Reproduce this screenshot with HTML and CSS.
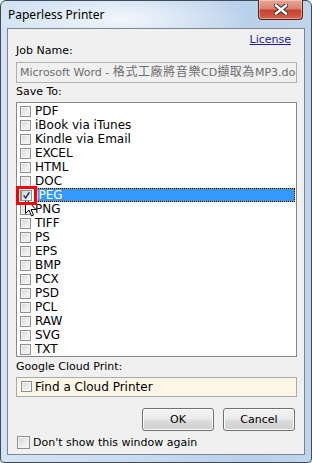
FILE: index.html
```html
<!DOCTYPE html>
<html lang="zh-TW">
<head>
  <meta charset="UTF-8">
  <meta name="viewport" content="width=device-width, initial-scale=1.0">
  <title>Paperless Printer</title>
  <link rel="stylesheet" href="styles.css">
</head>
<body>
  <div class="window">
    <div class="titlebar">
      <span class="title">Paperless Printer</span>
      <button class="close" type="button">
        <svg width="14" height="11" viewBox="0 0 14 11">
          <path d="M2 1.5 L12 9.5 M12 1.5 L2 9.5" stroke="#3a2a28" stroke-width="4.4" stroke-linecap="square"/>
          <path d="M2 1.5 L12 9.5 M12 1.5 L2 9.5" stroke="#fff" stroke-width="2.4" stroke-linecap="square"/>
        </svg>
      </button>
    </div>

    <div class="client">
      <div class="top-row">
        <span class="label job">Job Name:</span>
        <a class="license" href="#">License</a>
      </div>
      <div class="textbox">Microsoft Word - <span class="cjk">格式工廠將音樂</span>CD<span class="cjk">擷取為</span>MP3.doc</div>

      <div class="label save">Save To:</div>
      <ul class="list">
        <li><span class="cb"></span><span class="name">PDF</span></li>
        <li><span class="cb"></span><span class="name">iBook via iTunes</span></li>
        <li><span class="cb"></span><span class="name">Kindle via Email</span></li>
        <li><span class="cb"></span><span class="name">EXCEL</span></li>
        <li><span class="cb"></span><span class="name">HTML</span></li>
        <li><span class="cb"></span><span class="name">DOC</span></li>
        <li class="selected"><span class="cb checked"></span><span class="name">JPEG</span></li>
        <li><span class="cb"></span><span class="name">PNG</span></li>
        <li><span class="cb"></span><span class="name">TIFF</span></li>
        <li><span class="cb"></span><span class="name">PS</span></li>
        <li><span class="cb"></span><span class="name">EPS</span></li>
        <li><span class="cb"></span><span class="name">BMP</span></li>
        <li><span class="cb"></span><span class="name">PCX</span></li>
        <li><span class="cb"></span><span class="name">PSD</span></li>
        <li><span class="cb"></span><span class="name">PCL</span></li>
        <li><span class="cb"></span><span class="name">RAW</span></li>
        <li><span class="cb"></span><span class="name">SVG</span></li>
        <li><span class="cb"></span><span class="name">TXT</span></li>
      </ul>

      <div class="label cloud-label">Google Cloud Print:</div>
      <div class="cloud"><span class="cb"></span><span class="name">Find a Cloud Printer</span></div>

      <div class="buttons">
        <button class="btn" type="button">OK</button>
        <button class="btn" type="button">Cancel</button>
      </div>

      <div class="dontshow"><span class="cb big"></span><span>Don't show this window again</span></div>
    </div>

    <!-- annotation overlays from the screenshot -->
    <div class="marker">
      <svg class="tick" width="11" height="11" viewBox="0 0 11 11">
        <path d="M2 5.5 L4.5 8.5 L9 1.5" fill="none" stroke="#1f3a78" stroke-width="1.8"/>
      </svg>
    </div>
    <svg class="cursor" width="12" height="19" viewBox="0 0 12 19">
      <path d="M0.5 0.5 L0.5 15.5 L4 12 L6.5 18 L8.5 17 L6 11.5 L11 11.5 Z" fill="#fff" stroke="#000" stroke-width="1"/>
    </svg>
  </div>
</body>
</html>
```

FILE: styles.css
```css
* {
  box-sizing: border-box;
  margin: 0;
  padding: 0;
}
body {
  width: 312px;
  height: 463px;
  overflow: hidden;
  background-color: #fff;
  font-family: "DejaVu Sans", "Noto Sans CJK TC", sans-serif;
  font-size: 11px;
  color: #000;
}
.window {
  position: relative;
  width: 312px;
  height: 463px;
  border: 1px solid #3d4b5a;
  border-radius: 6px 6px 4px 4px;
  padding: 0 6px 7px 6px;
  background:
    radial-gradient(ellipse 130px 30px at 120px 18px, rgba(255,255,255,0.75), rgba(255,255,255,0) 100%),
    linear-gradient(90deg, #d3e3f3 0%, #c9dcf0 40%, #b9d0ea 80%, #bfd5ec 100%);
}
.titlebar {
  height: 27px;
  display: flex;
  justify-content: space-between;
  align-items: flex-start;
  padding-left: 1px;
}
.title {
  font-family: "Noto Sans", "Open Sans", sans-serif;
  font-size: 12px;
  line-height: 16px;
  margin-top: 6px;
  color: #000;
}
.close {
  width: 45px;
  height: 20px;
  margin-top: -1px;
  margin-right: 2px;
  border: 1px solid #5b2118;
  border-top: none;
  border-radius: 0 0 4px 4px;
  background: linear-gradient(#e7a696 0%, #d98272 45%, #c5442f 55%, #d3614a 100%);
  box-shadow: inset 0 0 0 1px rgba(255,220,210,0.5);
  display: flex;
  justify-content: center;
  align-items: center;
}
.client {
  height: 427px;
  border: 1px solid #7b8590;
  background-color: #f0f0f0;
  padding: 4px 7px 0 8px;
  display: flex;
  flex-direction: column;
}
.label {
  line-height: 13px;
}
.top-row {
  display: flex;
  justify-content: space-between;
  align-items: flex-start;
}
.top-row .job {
  margin-top: 11px;
}
.license {
  line-height: 14px;
  margin-right: 6px;
  color: #1d1aa8;
  text-decoration: underline;
}
.textbox {
  margin-top: 5px;
  height: 21px;
  border: 1px solid #adb2b5;
  background-color: #f0f0f0;
  color: #6d6d6d;
  padding-left: 3px;
  line-height: 19px;
  white-space: nowrap;
  overflow: hidden;
}
.textbox .cjk {
  font-size: 12px;
  letter-spacing: 0.6px;
}
.save {
  margin-top: 2px;
  margin-bottom: 4px;
}
.list {
  list-style: none;
  height: 255px;
  border: 1px solid #828790;
  background-color: #fff;
  padding-top: 1px;
  font-size: 12px;
}
.list li {
  display: flex;
  align-items: flex-start;
  height: 14px;
  line-height: 14px;
  padding-left: 3px;
}
.cb {
  flex: none;
  width: 11px;
  height: 11px;
  margin-top: 2px;
  margin-right: 3px;
  border: 1px solid #8e8f8f;
  background: linear-gradient(135deg, #d2d4d8 0%, #eceded 60%, #f8f8f8 100%);
  box-shadow: inset 0 0 0 1px #f4f4f4;
}
.list .name {
  flex: 1;
  padding-left: 1px;
  margin-right: 1px;
  height: 14px;
}
.list li.selected .name {
  color: #fff;
  line-height: 12px;
  padding-left: 0;
  border: 1px dotted #000;
  background:
    linear-gradient(#3399ff, #3399ff) padding-box,
    linear-gradient(#f59a1a, #f59a1a) border-box;
}
.cloud-label {
  margin-top: 3px;
  margin-bottom: 4px;
}
.cloud {
  height: 20px;
  display: flex;
  align-items: flex-start;
  border: 1px solid #a7abb0;
  background-color: #fdf6e6;
  padding-left: 4px;
  font-size: 12px;
  line-height: 18px;
}
.cloud .cb {
  margin-top: 3px;
  margin-right: 3px;
}
.buttons {
  display: flex;
  justify-content: flex-end;
  gap: 9px;
  margin-top: 11px;
  margin-right: 2px;
}
.btn {
  width: 72px;
  height: 23px;
  border: 1px solid #707070;
  border-radius: 3px;
  background: linear-gradient(#f2f2f2 0%, #ebebeb 48%, #dddddd 52%, #cfcfcf 100%);
  box-shadow: inset 0 0 0 1px #fcfcfc;
  font-family: "DejaVu Sans", sans-serif;
  font-size: 11px;
  color: #000;
}
.dontshow {
  display: flex;
  align-items: center;
  margin-top: 5px;
  line-height: 13px;
}
.dontshow .cb.big {
  width: 13px;
  height: 13px;
  margin-top: 0;
  margin-left: 1px;
  margin-right: 3px;
}
.marker {
  position: absolute;
  left: 15px;
  top: 185px;
  width: 21px;
  height: 19px;
  border: 3px solid #f00;
  z-index: 2;
  display: flex;
  align-items: center;
  justify-content: center;
}
.marker .tick {
  background: linear-gradient(135deg, #d2d4d8 0%, #f8f8f8 100%);
  border: 1px solid #8e8f8f;
}
.cursor {
  position: absolute;
  left: 24px;
  top: 197px;
  z-index: 1;
}
```
